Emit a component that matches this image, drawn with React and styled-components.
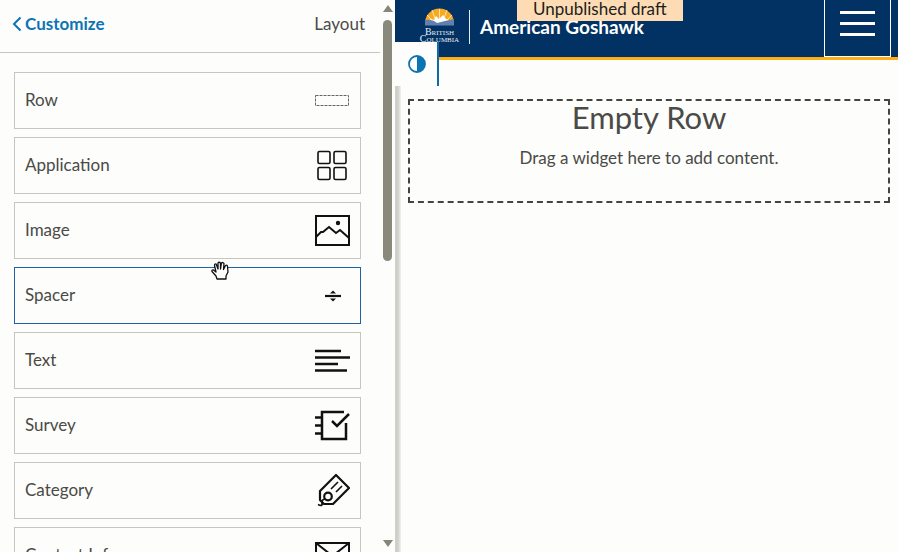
import React from "react";
import styled, { createGlobalStyle, css } from "styled-components";

const Global = createGlobalStyle`
  *, *::before, *::after { box-sizing: border-box; }
  html, body, #root { height: 100%; }
  body {
    margin: 0;
    overflow: hidden;
    background: #fdfdfb;
    color: #4a4a46;
    font: 17px/24px Lato, "Noto Sans", sans-serif;
  }
  button, a { font: inherit; color: inherit; }
`;

const Shell = styled.div`
  position: relative;
  display: grid;
  grid-template-columns: 395px minmax(0, 1fr);
  height: 100vh;
  overflow: hidden;
`;

const Sidebar = styled.aside`
  display: grid;
  grid-template-columns: minmax(0, 1fr) 15px;
  min-height: 0;
`;

const SidebarBody = styled.div`
  min-height: 0;
  overflow: hidden;
`;

const SidebarHeader = styled.header`
  display: flex;
  align-items: center;
  justify-content: space-between;
  height: 53px;
  padding: 0 15px 4px 12px;
  border-bottom: 1px solid #c6c6c0;
`;

const BackLink = styled.a`
  display: flex;
  align-items: center;
  gap: 3px;
  color: #0c73b5;
  font-size: 17px;
  font-weight: 700;
  text-decoration: none;
`;

const PanelTitle = styled.h2`
  margin: 0;
  font-size: 17px;
  font-weight: 400;
`;

const WidgetList = styled.ul`
  display: flex;
  flex-direction: column;
  gap: 8px;
  margin: 0;
  padding: 19px 19px 19px 14px;
  list-style: none;
`;

const WidgetButton = styled.button`
  display: flex;
  align-items: center;
  justify-content: space-between;
  width: 100%;
  height: 57px;
  padding: 0 10px 2px;
  background: transparent;
  border: 1px solid ${(p) => (p.$active ? "#1d63a3" : "#c6c6c0")};
  cursor: grab;
  text-align: left;
  svg { display: block; flex: none; }
`;

const ScrollRail = styled.div`
  display: flex;
  flex-direction: column;
  align-items: center;
  justify-content: space-between;
  padding: 5px 0;
`;

const RailTrack = styled.div`
  flex: 1;
  margin: 8px 0;
`;

const RailThumb = styled.div`
  width: 9px;
  height: 47%;
  min-height: 40px;
  border-radius: 5px;
  background: #8a8a7c;
`;

const RailArrow = styled.div`
  width: 0;
  height: 0;
  border: 5px solid transparent;
  ${(p) =>
    p.$up
      ? css`border-top: 0; border-bottom: 7px solid #85857a;`
      : css`border-bottom: 0; border-top: 7px solid #85857a;`}
`;

const Preview = styled.main`
  position: relative;
  min-width: 0;
`;

const SiteHeader = styled.header`
  display: flex;
  align-items: stretch;
  height: 60px;
  padding: 0 7px 0 24px;
  background: #023264;
  border-bottom: 3px solid #fcaf17;
`;

const Brand = styled.div`
  display: flex;
  align-items: center;
  flex: 1;
  min-width: 0;
  padding-bottom: 3px;
`;

const SiteTitle = styled.h1`
  margin: 0;
  padding-left: 10px;
  border-left: 1px solid #e4ebf2;
  color: #fff;
  font-size: 19px;
  font-weight: 700;
  line-height: 34px;
  white-space: nowrap;
`;

const LogoBox = styled.div`
  width: 50px;
  svg { display: block; }
`;

const MenuButton = styled.button`
  display: flex;
  flex-direction: column;
  align-items: center;
  gap: 8px;
  width: 67px;
  padding: 11px 0 0;
  background: transparent;
  border: 1px solid #fff;
  border-top: 0;
`;

const MenuBar = styled.span`
  width: 35px;
  height: 3px;
  background: #fff;
`;

const DraftBadge = styled.div`
  position: absolute;
  top: 0;
  left: 122px;
  padding: 0 16px 3px;
  background: #fddcb5;
  color: #1c1c1c;
  font-size: 17px;
  line-height: 18px;
  white-space: nowrap;
`;

const ContrastButton = styled.button`
  position: absolute;
  top: 42px;
  left: 0;
  display: flex;
  align-items: center;
  justify-content: center;
  width: 44px;
  height: 44px;
  padding: 0 0 0 2px;
  background: #fdfdfb;
  border: 0;
  border-right: 2px solid #0f6ba8;
`;

const Canvas = styled.div`
  display: flex;
  height: calc(100% - 60px);
`;

const PanelEdge = styled.div`
  flex: none;
  width: 6px;
  margin-top: 26px;
  background: linear-gradient(90deg, #d0d0cb 0 50%, #f4f4ee);
`;

const CanvasBody = styled.div`
  flex: 1;
  min-width: 0;
  padding: 39px 8px 0 7px;
`;

const EmptyRow = styled.section`
  min-height: 104px;
  border: 2px dashed #454540;
  text-align: center;
`;

const EmptyTitle = styled.h2`
  margin: 0;
  font-size: 31px;
  font-weight: 400;
  line-height: 32px;
`;

const EmptyText = styled.p`
  margin: 13px 0 0;
`;

const GrabCursor = styled.div`
  position: absolute;
  top: 261px;
  left: 211px;
  pointer-events: none;
  svg { display: block; }
`;

const Icon = ({ children, w = 36, h = 34 }) => (
  <svg width={w} height={h} viewBox={`0 0 ${w} ${h}`} fill="none" stroke="#111" strokeWidth="2" aria-hidden="true">
    {children}
  </svg>
);

const RowIcon = () => (
  <Icon>
    <rect x="1.5" y="12.5" width="33" height="10" stroke="#666" strokeWidth="1" strokeDasharray="3 1" />
  </Icon>
);

const AppIcon = () => (
  <Icon>
    {[[4, 4], [20, 4], [4, 20], [20, 20]].map(([x, y]) => (
      <rect key={`${x}-${y}`} x={x} y={y - 0.5} width="12" height="12" rx="1.5" strokeWidth="1.6" />
    ))}
  </Icon>
);

const ImageIcon = () => (
  <Icon>
    <rect x="2" y="3" width="33" height="29" />
    <path d="M2 24 7 19H9L15 14 22 20 26 17 35 25" />
    <circle cx="24" cy="10" r="2.2" fill="#111" stroke="none" />
  </Icon>
);

const SpacerIcon = () => (
  <Icon>
    <path d="M11 18H27" strokeWidth="2.2" />
    <path d="M16 15.5 19 12.500 22 15.5ZM16 20.500 19 23.500 22 20.500Z" fill="#111" stroke="none" />
  </Icon>
);

const TextIcon = () => (
  <Icon>
    <path d="M1 8H27M1 14.500H36M1 21H24M1 27.500H33" strokeWidth="2.6" />
  </Icon>
);

const SurveyIcon = () => (
  <Icon>
    <path d="M30 4H8V31H32V15" strokeWidth="2.5" />
    <path d="M1 9.500H9M1 17.500H9M1 25.500H9" strokeWidth="2.5" />
    <path d="M18 13 23 18 35 6" strokeWidth="2.5" />
  </Icon>
);

const CategoryIcon = () => (
  <Icon h={36}>
    <path d="M22 3 35 16 19 32H10L6 28V19Z" strokeLinejoin="round" strokeWidth="2.2" />
    <circle cx="14" cy="24.500" r="3.8" strokeWidth="2.2" />
    <path d="M17 17 24 10M22 20 28 14" strokeWidth="1.6" />
    <path d="M11 27Q7 28 8 31Q9 35 4 32.500" strokeWidth="1.800" />
  </Icon>
);

const MailIcon = () => (
  <Icon>
    <rect x="2" y="5" width="33" height="24" />
    <path d="M2 5 18.500 18 35 5M2 29 14 15M35 29 23 15" />
  </Icon>
);

const Logo = () => (
  <svg width="50" height="40" viewBox="0 0 50 40" overflow="visible" role="img" aria-label="British Columbia">
    <path d="M6 16A14.500 14.500 0 0 1 35 16Z" fill="#f7a922" />
    <path d="M20.500 14V2M17 14 13 3M24 14 28 3M14 14 8 8M27 14 33 8" stroke="#ffe9a8" strokeWidth="1" />
    <path d="M8 15 12 12 15 13 17 9 20 12 24 8 27 12 33 14V17H8Z" fill="#fff" />
    <path d="M6 13Q13 12 18 16L26 14 35 12V18.500H6Z" fill="#6280ae" />
    <g fill="#e8edf3" fontFamily="Liberation Serif, serif" textAnchor="middle">
      <text x="20.500" y="28"><tspan fontSize="10">B</tspan><tspan fontSize="7">RITISH</tspan></text>
      <text x="20.500" y="35"><tspan fontSize="10">C</tspan><tspan fontSize="7">OLUMBIA</tspan></text>
    </g>
  </svg>
);

const widgets = [
  { label: "Row", Glyph: RowIcon },
  { label: "Application", Glyph: AppIcon },
  { label: "Image", Glyph: ImageIcon },
  { label: "Spacer", Glyph: SpacerIcon, active: true },
  { label: "Text", Glyph: TextIcon },
  { label: "Survey", Glyph: SurveyIcon },
  { label: "Category", Glyph: CategoryIcon },
  { label: "Contact Info", Glyph: MailIcon },
];

export default function App() {
  return (
    <Shell>
      <Global />
      <Sidebar>
        <SidebarBody>
          <SidebarHeader>
            <BackLink href="#customize">
              <svg width="10" height="16" viewBox="0 0 10 16" fill="none" stroke="currentColor" strokeWidth="2" aria-hidden="true">
                <path d="M8.500 1.500 2 8 8.500 14.500" />
              </svg>
              Customize
            </BackLink>
            <PanelTitle>Layout</PanelTitle>
          </SidebarHeader>
          <WidgetList>
            {widgets.map(({ label, Glyph, active }) => (
              <li key={label}>
                <WidgetButton type="button" $active={active}>
                  {label}
                  <Glyph />
                </WidgetButton>
              </li>
            ))}
          </WidgetList>
        </SidebarBody>
        <ScrollRail aria-hidden="true">
          <RailArrow $up />
          <RailTrack>
            <RailThumb />
          </RailTrack>
          <RailArrow />
        </ScrollRail>
      </Sidebar>
      <Preview>
        <SiteHeader>
          <Brand>
            <LogoBox><Logo /></LogoBox>
            <SiteTitle>American Goshawk</SiteTitle>
          </Brand>
          <MenuButton type="button" aria-label="Menu">
            <MenuBar />
            <MenuBar />
            <MenuBar />
          </MenuButton>
        </SiteHeader>
        <ContrastButton type="button" aria-label="Toggle contrast">
          <svg width="18" height="18" viewBox="0 0 18 18" aria-hidden="true">
            <circle cx="9" cy="9" r="8" fill="#fff" stroke="#0c73b5" strokeWidth="1.800" />
            <path d="M9 1A8 8 0 0 1 9 17Z" fill="#0c73b5" />
          </svg>
        </ContrastButton>
        <Canvas>
          <PanelEdge />
          <CanvasBody>
            <EmptyRow>
              <EmptyTitle>Empty Row</EmptyTitle>
              <EmptyText>Drag a widget here to add content.</EmptyText>
            </EmptyRow>
          </CanvasBody>
        </Canvas>
        <DraftBadge>Unpublished draft</DraftBadge>
      </Preview>
      <GrabCursor>
        <svg width="19" height="20" viewBox="0 0 19 20" fill="#fff" stroke="#111" strokeWidth="1.300" strokeLinejoin="round" aria-hidden="true">
          <path d="M6 18 5 15 1 10.500Q.5 8.500 2.500 9L5 11 3.500 4.500Q3.500 2.500 5.200 3L7 8 7 2Q8 .5 9.500 2V8L10.500 2Q12 .8 13 2.500L12.500 8.500 14.500 4.500Q16.500 3.500 16.500 5.500L17 11 15 15V18Z" />
        </svg>
      </GrabCursor>
    </Shell>
  );
}
